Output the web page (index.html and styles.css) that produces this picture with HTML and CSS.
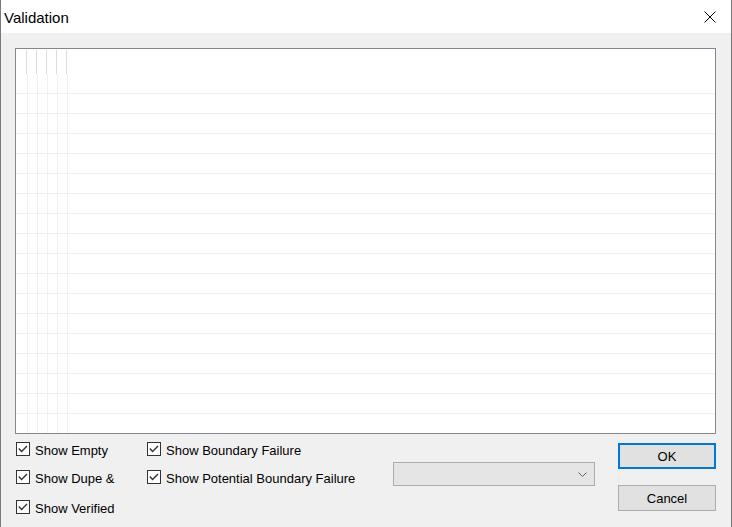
FILE: index.html
```html
<!DOCTYPE html>
<html lang="en">
<head>
    <meta charset="UTF-8">
    <title>Validation</title>
    <link rel="stylesheet" href="styles.css">
</head>
<body>

<div class="window">
    <div class="titlebar">
        <span class="title">Validation</span>
        <button class="close" type="button" aria-label="Close">
            <svg width="12" height="12" viewBox="0 0 12 12">
                <path d="M0.5 0.5 L11.5 11.5 M11.5 0.5 L0.5 11.5" stroke="#000" stroke-width="1" fill="none"/>
            </svg>
        </button>
    </div>

    <div class="client">
        <div class="grid">
            <div class="grid-head">
                <div class="hcell first"></div>
                <div class="hcell"></div>
                <div class="hcell"></div>
                <div class="hcell"></div>
                <div class="hcell"></div>
                <div class="hcell fill"></div>
            </div>
            <div class="grid-body" id="grid-body"></div>
        </div>

        <div class="bottom">
            <div class="checks col1">
                <label class="check"><span class="box"></span><span class="label">Show Empty</span></label>
                <label class="check"><span class="box"></span><span class="label">Show Dupe &amp;</span></label>
                <label class="check last"><span class="box"></span><span class="label">Show Verified</span></label>
            </div>
            <div class="checks col2">
                <label class="check"><span class="box"></span><span class="label">Show Boundary Failure</span></label>
                <label class="check"><span class="box"></span><span class="label">Show Potential Boundary Failure</span></label>
            </div>
            <div class="combo">
                <svg width="9" height="5" viewBox="0 0 9 5">
                    <path d="M0.5 0.5 L4.5 4.5 L8.5 0.5" stroke="#606060" stroke-width="1" fill="none"/>
                </svg>
            </div>
            <div class="buttons">
                <button type="button" class="btn ok">OK</button>
                <button type="button" class="btn">Cancel</button>
            </div>
        </div>
    </div>
</div>

<script>
    // empty rows of the grid
    let body = document.getElementById("grid-body");
    for (let i = 0; i < 18; i++) {
        let row = document.createElement("div");
        row.className = "row";
        for (let c = 0; c < 6; c++) {
            let cell = document.createElement("div");
            cell.className = c === 0 ? "cell first" : (c === 5 ? "cell fill" : "cell");
            row.appendChild(cell);
        }
        body.appendChild(row);
    }

    // checkmarks
    document.querySelectorAll(".box").forEach(function(box) {
        box.innerHTML = '<svg width="12" height="12" viewBox="0 0 12 12"><path d="M1.8 5.6 L4.6 8.4 L10 3" stroke="#333" stroke-width="1.4" fill="none"/></svg>';
    });
</script>

</body>
</html>
```

FILE: styles.css
```css
* {
    box-sizing: border-box;
    margin: 0;
    padding: 0;
}
body {
    width: 732px;
    height: 527px;
    font-family: "Liberation Sans", Arial, sans-serif;
    font-size: 13px;
    color: #000;
    background: #fff;
}
.window {
    width: 732px;
    height: 527px;
    display: flex;
    flex-direction: column;
    border-left: 1px solid #7a7a7a;
    border-right: 1px solid #7a7a7a;
    border-bottom: 1px solid #7a7a7a;
}
.titlebar {
    height: 33px;
    display: flex;
    align-items: center;
    justify-content: space-between;
    background: #fff;
}
.title {
    font-size: 15px;
    padding-left: 3px;
    padding-top: 1px;
}
.close {
    width: 40px;
    height: 33px;
    border: none;
    background: transparent;
    display: flex;
    align-items: center;
    justify-content: center;
    margin-right: 1px;
}
.client {
    flex: 1;
    background: #f0f0f0;
    padding: 15px 15px 0 14px;
}

/* data grid */
.grid {
    width: 701px;
    height: 386px;
    border: 1px solid #828790;
    background: #fff;
    overflow: hidden;
}
.grid-head {
    display: flex;
    height: 25px;
    padding-top: 1px;
}
.hcell {
    width: 10px;
    height: 24px;
    border-right: 1px solid #dcdcdc;
}
.hcell.first {
    width: 11px;
}
.hcell.fill,
.cell.fill {
    flex: 1;
    border-right: none;
}
.row {
    display: flex;
    height: 20px;
    border-bottom: 1px solid #f0f0f0;
}
.cell {
    width: 10px;
    border-right: 1px solid #f0f0f0;
}
.cell.first {
    width: 12px;
}

/* bottom controls */
.bottom {
    display: flex;
    align-items: flex-start;
}
.checks {
    display: flex;
    flex-direction: column;
    padding-top: 8px;
}
.col1 {
    width: 132px;
    padding-left: 1px;
}
.col2 {
    width: 246px;
}
.check {
    display: flex;
    align-items: center;
    height: 14px;
    margin-bottom: 14px;
}
.check:nth-child(2) {
    margin-bottom: 16px;
}
.box {
    width: 14px;
    height: 14px;
    border: 1px solid #333;
    background: #fff;
    display: flex;
    align-items: center;
    justify-content: center;
}
.label {
    margin-left: 5px;
    margin-top: 3px;
    white-space: nowrap;
}
.combo {
    width: 202px;
    height: 24px;
    margin-top: 28px;
    border: 1px solid #adadad;
    background: #e5e5e5;
    display: flex;
    align-items: center;
    justify-content: flex-end;
    padding-right: 7px;
    padding-top: 1px;
}
.buttons {
    display: flex;
    flex-direction: column;
    margin-left: 23px;
    padding-top: 9px;
}
.btn {
    width: 98px;
    height: 26px;
    border: 1px solid #adadad;
    background: #e1e1e1;
    font-family: "Liberation Sans", Arial, sans-serif;
    font-size: 13px;
    color: #000;
    margin-bottom: 16px;
}
.btn.ok {
    border: 2px solid #0078d7;
}
```
